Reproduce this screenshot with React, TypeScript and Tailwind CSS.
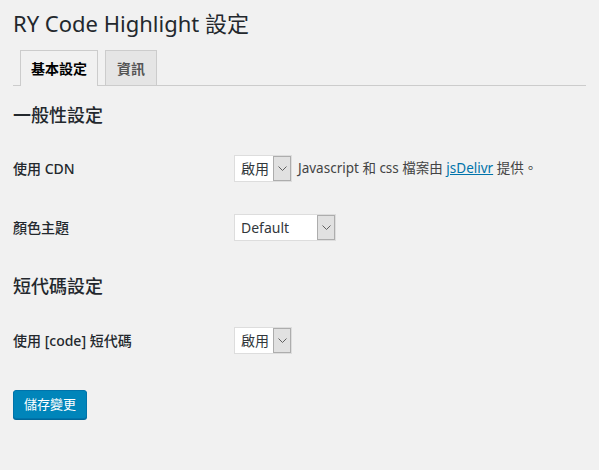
import React from "react";

const font = '"Noto Sans", "Noto Sans CJK TC", sans-serif';

function Select({ value, width }: { value: string; width: number }) {
  return (
    <div
      className="flex h-[27px] border border-[#dddddd] bg-white"
      style={{ width }}
    >
      <div className="flex flex-1 items-center pl-[6px] text-[14px] text-[#32373c]">{value}</div>
      <div className="flex w-[18px] items-center justify-center border border-[#adadad] bg-[#e1e1e1]">
        <svg width="9" height="5" viewBox="0 0 9 5">
          <polyline points="0.5,0.5 4.5,4.5 8.5,0.5" fill="none" stroke="#606060" strokeWidth="1" />
        </svg>
      </div>
    </div>
  );
}

export default function App() {
  return (
    <div className="min-h-[470px] bg-[#f1f1f1] px-[13px] text-[#23282d]" style={{ fontFamily: font }}>
      <h1 className="m-0 pt-[9px] pb-[3px] text-[22px] leading-[29px] font-normal text-[#23282d]">
        RY Code Highlight 設定
      </h1>
      <div className="flex h-[45px] items-end border-b border-[#cccccc] pt-[9px]">
        <div className="ml-[7px] flex h-[36px] -mb-px items-center border border-b-0 border-[#cccccc] bg-[#f1f1f1] px-[10px] text-[14px] font-semibold text-black">
          基本設定
        </div>
        <div className="ml-[7px] flex h-[35px] items-center border border-b-0 border-[#cccccc] bg-[#e5e5e5] px-[11px] text-[14px] font-semibold text-[#555555]">
          資訊
        </div>
      </div>
      <h2 className="mt-[17px] h-[24px] text-[18px] leading-[24px] font-medium">一般性設定</h2>
      <div className="mt-[28px] flex h-[27px] items-center">
        <div className="w-[221px] text-[14px] font-medium">使用 CDN</div>
        <Select value="啟用" width={58} />
        <span className="ml-[6px] text-[13.5px] text-[#444444]">
          Javascript 和 css 檔案由 <a className="text-[#0073aa] underline" href="#">jsDelivr</a> 提供。
        </span>
      </div>
      <div className="mt-[32px] flex h-[27px] items-center">
        <div className="w-[221px] text-[14px] font-medium">顏色主題</div>
        <Select value="Default" width={102} />
      </div>
      <h2 className="mt-[33px] h-[24px] text-[18px] leading-[24px] font-medium">短代碼設定</h2>
      <div className="mt-[29px] flex h-[27px] items-center">
        <div className="w-[221px] text-[14px] font-medium">使用 [code] 短代碼</div>
        <Select value="啟用" width={58} />
      </div>
      <div className="mt-[36px]">
        <button className="h-[29px] w-[74px] rounded-[3px] border border-[#0073aa] bg-[#0085ba] text-[13px] text-white shadow-[0_1px_0_#006799]">
          儲存變更
        </button>
      </div>
    </div>
  );
}
